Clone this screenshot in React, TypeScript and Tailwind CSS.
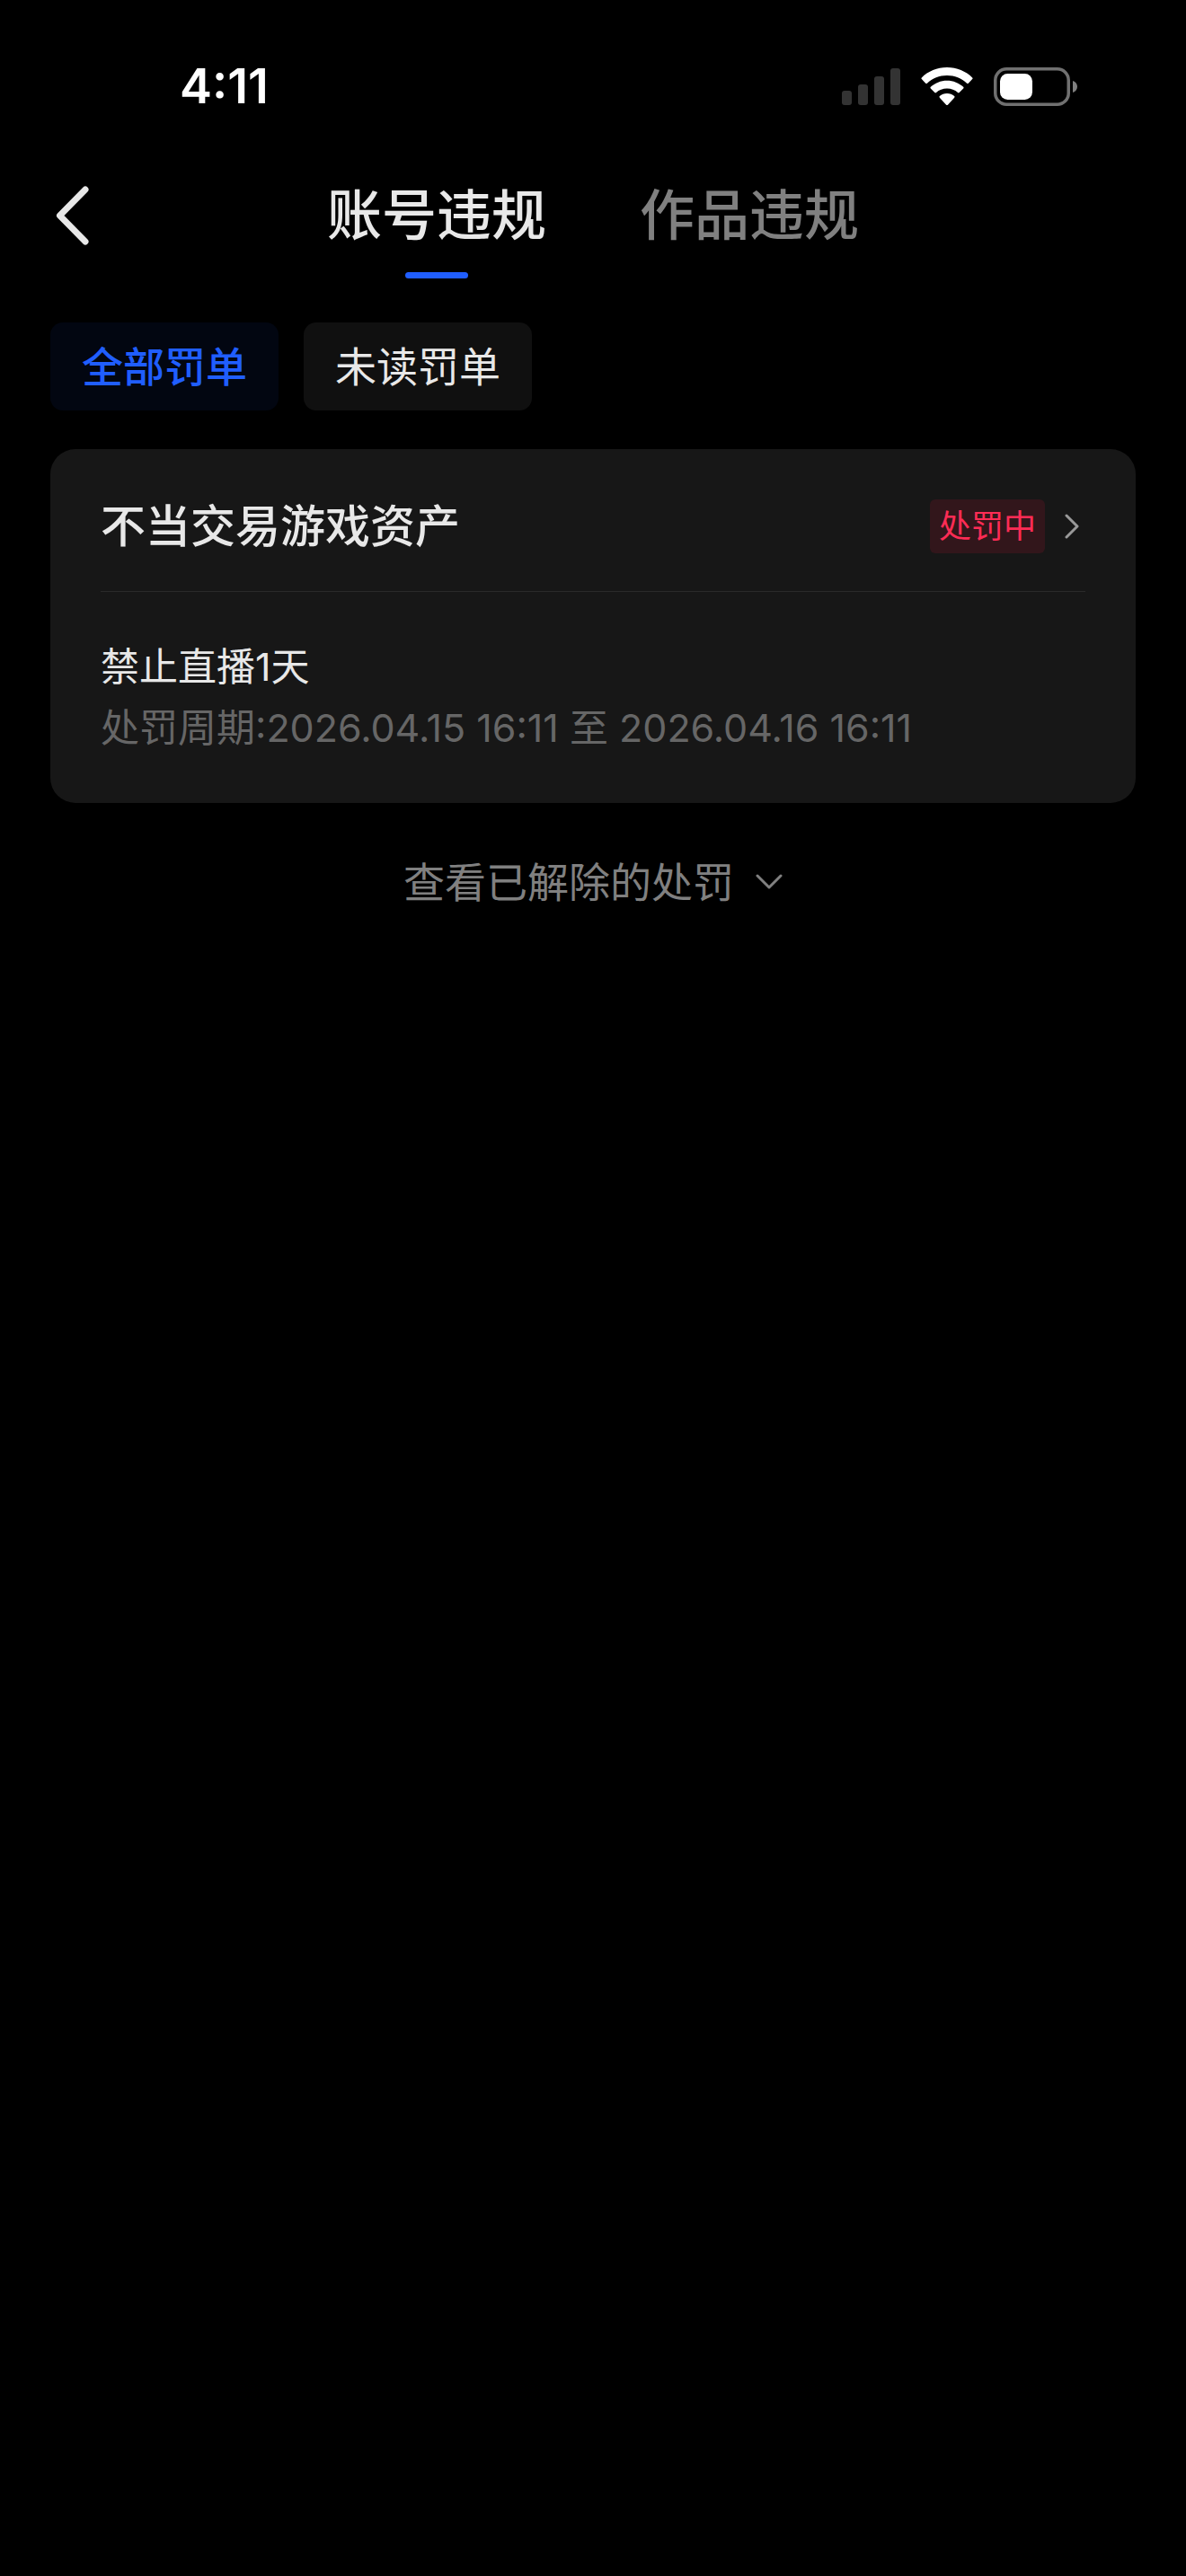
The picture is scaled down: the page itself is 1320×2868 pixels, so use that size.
import { useState } from 'react';

const tabs = ['账号违规', '作品违规'];
const filters = ['全部罚单', '未读罚单'];

const tickets = [
  {
    title: '不当交易游戏资产',
    status: '处罚中',
    punishment: '禁止直播1天',
    period: '处罚周期:2026.04.15 16:11 至 2026.04.16 16:11',
  },
];

const SignalIcon = () => (
  <svg width="65" height="43" viewBox="0 0 65 43" fill="#333333" aria-hidden="true">
    <rect x="0" y="26" width="11" height="16" rx="3" />
    <rect x="18" y="19" width="11" height="23" rx="3" />
    <rect x="36" y="10" width="11" height="32" rx="3" />
    <rect x="54" y="1" width="11" height="41" rx="3" />
  </svg>
);

const WifiIcon = () => (
  <svg width="58" height="43" viewBox="0 0 58 43" fill="#ffffff" aria-hidden="true">
    <path d="M29 0C40 0 50 4.300 57.200 11.400C57.700 11.900 57.700 12.600 57.200 13.100L52.800 17.700C52.300 18.200 51.600 18.200 51.100 17.700C45.300 12.200 37.500 8.900 29 8.900S12.700 12.200 6.900 17.700C6.400 18.200 5.700 18.200 5.200 17.700L0.800 13.100C0.300 12.600 0.300 11.900 0.800 11.400C8 4.300 18 0 29 0Z" />
    <path d="M29 14.700C36 14.700 42.400 17.400 47.200 21.800C47.700 22.300 47.700 23 47.200 23.500L42.700 28C42.200 28.500 41.500 28.500 41 28C37.800 25.200 33.600 23.600 29 23.600S20.200 25.200 17 28C16.500 28.500 15.800 28.500 15.300 28L10.800 23.500C10.300 23 10.300 22.300 10.800 21.800C15.600 17.400 22 14.700 29 14.700Z" />
    <path d="M29 29C32.200 29 35 30.200 37.200 32.100C37.700 32.600 37.700 33.200 37.200 33.700L29.900 41.700C29.400 42.200 28.600 42.200 28.100 41.700L20.800 33.700C20.300 33.200 20.300 32.600 20.800 32.100C23 30.200 25.800 29 29 29Z" />
  </svg>
);

const BatteryIcon = () => (
  <svg width="94" height="43" viewBox="0 0 94 43" fill="none" aria-hidden="true">
    <rect x="1.750" y="1.750" width="81.500" height="39.500" rx="12.500" stroke="#707070" strokeWidth="3.500" />
    <rect x="7" y="7" width="36" height="29" rx="8.500" fill="#ffffff" />
    <path d="M88 15C91.200 16 93 18.600 93 21.500S91.200 27 88 28Z" fill="#808080" />
  </svg>
);

export default function App() {
  const [activeTab, setActiveTab] = useState(tabs[0]);
  const [activeFilter, setActiveFilter] = useState(filters[0]);

  return (
    <div className="min-h-screen bg-black text-[#e8e8e8] font-['Inter','Noto_Sans_CJK_SC',sans-serif]">
      <div className="flex h-[192px] items-center justify-between pl-[200px] pr-[120px]">
        <span className="text-[54px] leading-[60px] font-semibold text-white">4:11</span>
        <div className="flex items-center gap-[23px]">
          <SignalIcon />
          <WifiIcon />
          <BatteryIcon />
        </div>
      </div>

      <header className="grid grid-cols-[1fr_auto_1fr] items-start px-14">
        <button type="button" aria-label="返回" className="flex h-[96px] w-[90px] items-center pl-[6px]">
          <svg width="38" height="68" viewBox="0 0 38 68" fill="none" aria-hidden="true">
            <path d="M33 5L4.500 34L33 63" stroke="#e8e8e8" strokeWidth="7" strokeLinecap="round" strokeLinejoin="round" />
          </svg>
        </button>
        <nav className="flex gap-[104px]">
          {tabs.map((tab) => (
            <button
              key={tab}
              type="button"
              onClick={() => setActiveTab(tab)}
              className={`flex flex-col items-center text-[61px] leading-[96px] font-medium ${tab === activeTab ? 'text-[#e8e8e8]' : 'text-[#808080]'}`}
            >
              {tab}
              <span className={`mt-[15px] h-[7px] w-[70px] rounded-full ${tab === activeTab ? 'bg-[#205eff]' : ''}`} />
            </button>
          ))}
        </nav>
      </header>

      <main className="px-14 pt-[49px]">
        <div className="flex gap-7">
          {filters.map((filter) => (
            <button
              key={filter}
              type="button"
              onClick={() => setActiveFilter(filter)}
              className={`h-[98px] rounded-[14px] px-[35px] text-[46px] ${filter === activeFilter ? 'bg-[#020611] font-medium text-[#205eff]' : 'bg-[#101010] text-[#e8e8e8]'}`}
            >
              {filter}
            </button>
          ))}
        </div>

        {tickets.map((ticket) => (
          <article key={ticket.title} className="mt-[43px] rounded-[28px] bg-[#171717] px-14 pb-[50px]">
            <div className="flex items-center justify-between border-b border-[#2a2a2a] pt-14 pb-[42px]">
              <h2 className="text-[50px] leading-[60px] font-medium">{ticket.title}</h2>
              <a href="#detail" className="flex items-center gap-[22px] pr-[7px]">
                <span className="rounded-md bg-[#32161b] px-[10px] text-[36px] leading-[60px] text-[#fe2c55]">
                  {ticket.status}
                </span>
                <svg width="16" height="28" viewBox="0 0 16 28" fill="none" aria-hidden="true">
                  <path d="M2 2L14 14L2 26" stroke="#999999" strokeWidth="3" strokeLinecap="round" strokeLinejoin="round" />
                </svg>
              </a>
            </div>
            <div className="pt-[49px] text-[43px] leading-[68px]">
              <p>{ticket.punishment}</p>
              <p className="text-[#666666]">{ticket.period}</p>
            </div>
          </article>
        ))}

        <div className="mt-[52px] flex justify-center">
          <button type="button" className="flex items-center gap-6 text-[46px] leading-[72px] text-[#808080]">
            查看已解除的处罚
            <svg width="30" height="18" viewBox="0 0 30 18" fill="none" aria-hidden="true">
              <path d="M2 2L15 15L28 2" stroke="#808080" strokeWidth="3" strokeLinecap="round" strokeLinejoin="round" />
            </svg>
          </button>
        </div>
      </main>
    </div>
  );
}
